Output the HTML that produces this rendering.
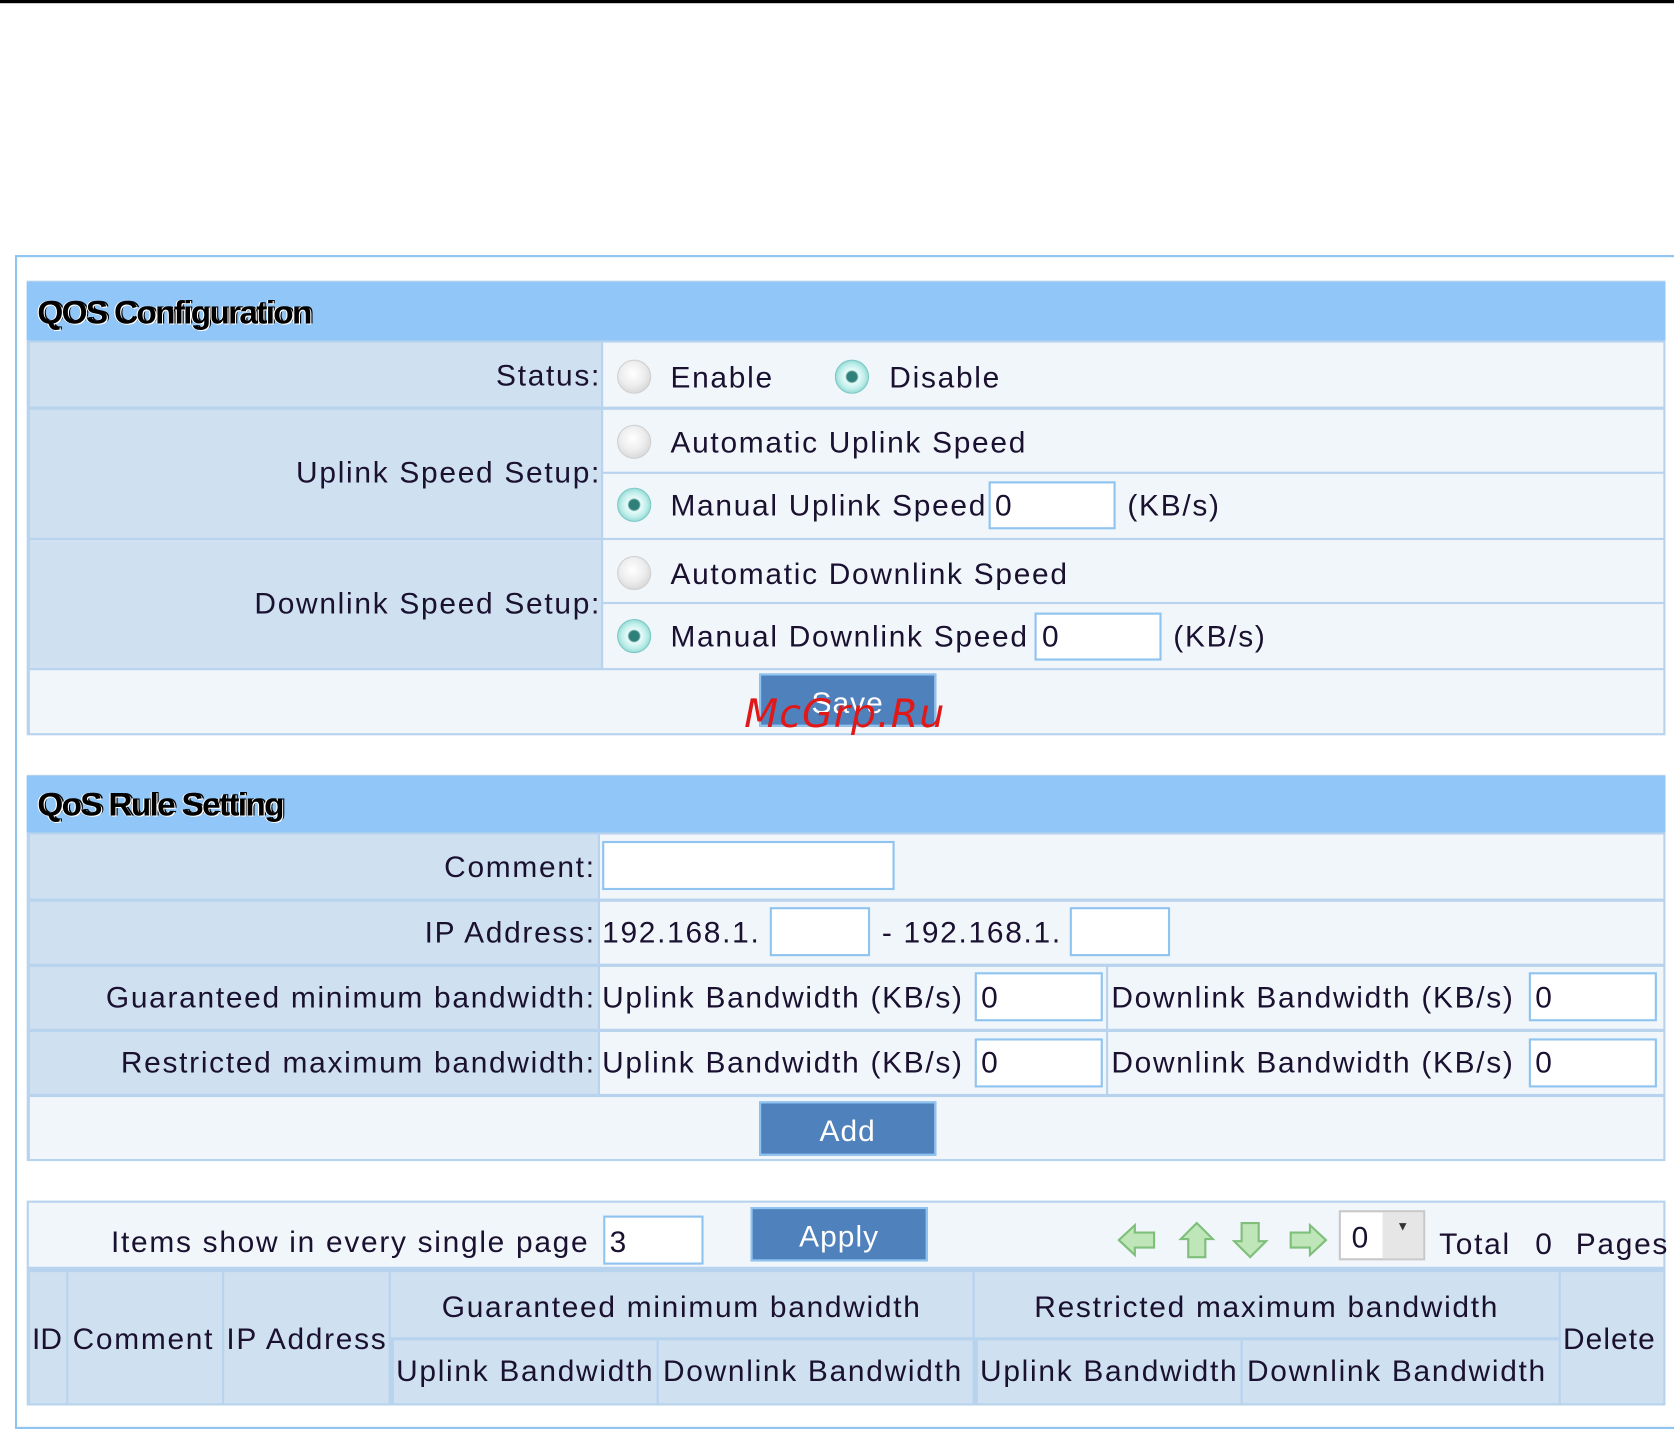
<!DOCTYPE html>
<html><head><meta charset="utf-8">
<style>
html,body{margin:0;padding:0;background:#fff;width:1674px;height:1430px;overflow:hidden}
#w{position:absolute;left:0;top:0;width:1568px;height:1340px;transform:scale(1.0676,1.0672);transform-origin:0 0;font-family:"Liberation Sans","DejaVu Sans",sans-serif;font-size:28px;color:#1a1030}
#w div{position:absolute;box-sizing:border-box}
.l{background:#cfe0f1}
.v{background:#f1f6fb}
.h{background:#90c6f8}
.t{white-space:nowrap;line-height:1;letter-spacing:1.6px}
.r{text-align:right}
.c{text-align:center}
.in{background:#fff;border:2px solid #8fc3f0}
.btn{background:#4f81bd;border:2px solid #8fc3f0;color:#fff;text-align:center;letter-spacing:1px}
.rad{width:32px;height:32px;border-radius:50%;background:radial-gradient(circle at 45% 40%,#fff 0,#eee 45%,#c8c8c8 100%);border:1px solid #d0d0d0}
.rad.on{background:radial-gradient(circle,#2f7f7a 0,#2f7f7a 22%,#e8fbfa 30%,#bfeeea 55%,#5cbdb7 100%);border:1px solid #7ac9c4}
.ttl{font-weight:bold;font-size:30px;color:#000;letter-spacing:-1.5px;text-shadow:1px 1px 0 #fff,-1px 0 0 #fff,2px 0 0 #000;transform:scaleX(1.04);transform-origin:0 0}
</style></head><body>
<div id="w">
<div style="left:0;top:0;width:1568px;height:3px;background:#000"></div>
<div style="left:14px;top:239px;width:1560px;height:1100px;border:2px solid #8fc3f0"></div>

<div style="left:25px;top:263px;width:1535px;height:426px;background:#b7d3ee"></div>
<div class="h" style="left:25px;top:264px;width:1535px;height:55px"></div>
<div class="t ttl" style="left:35px;top:279px">QOS Configuration</div>
<div class="l" style="left:28px;top:321px;width:535px;height:60px"></div>
<div class="v" style="left:565px;top:321px;width:993px;height:60px"></div>
<div class="l" style="left:28px;top:384px;width:535px;height:120px"></div>
<div class="v" style="left:565px;top:384px;width:993px;height:58px"></div>
<div class="v" style="left:565px;top:444px;width:993px;height:60px"></div>
<div class="l" style="left:28px;top:506px;width:535px;height:120px"></div>
<div class="v" style="left:565px;top:506px;width:993px;height:58px"></div>
<div class="v" style="left:565px;top:566px;width:993px;height:60px"></div>
<div class="v" style="left:28px;top:628px;width:1530px;height:59px"></div>

<div class="t r" style="left:28px;width:535px;top:338px">Status:</div>
<div class="rad" style="left:578px;top:337px"></div><div class="t" style="left:628px;top:340px">Enable</div>
<div class="rad on" style="left:782px;top:337px"></div><div class="t" style="left:833px;top:340px">Disable</div>
<div class="t r" style="left:28px;width:535px;top:429px">Uplink Speed Setup:</div>
<div class="rad" style="left:578px;top:398px"></div><div class="t" style="left:628px;top:401px">Automatic Uplink Speed</div>
<div class="rad on" style="left:578px;top:457px"></div><div class="t" style="left:628px;top:460px">Manual Uplink Speed</div>
<div class="in" style="left:926px;top:451px;width:119px;height:45px"></div><div class="t" style="left:932px;top:460px">0</div>
<div class="t" style="left:1056px;top:460px">(KB/s)</div>
<div class="t r" style="left:28px;width:535px;top:552px">Downlink Speed Setup:</div>
<div class="rad" style="left:578px;top:521px"></div><div class="t" style="left:628px;top:524px">Automatic Downlink Speed</div>
<div class="rad on" style="left:578px;top:580px"></div><div class="t" style="left:628px;top:583px">Manual Downlink Speed</div>
<div class="in" style="left:969px;top:574px;width:119px;height:45px"></div><div class="t" style="left:976px;top:583px">0</div>
<div class="t" style="left:1099px;top:583px">(KB/s)</div>
<div class="btn" style="left:711px;top:631px;width:166px;height:50px;padding-top:10px;font-size:28px">Save</div>
<div class="t" style="left:697px;top:650px;color:#e01818;font-style:italic;font-size:37px;letter-spacing:1px;font-family:'DejaVu Sans',sans-serif">McGrp.Ru</div>

<div style="left:25px;top:726px;width:1535px;height:362px;background:#b7d3ee"></div>
<div class="h" style="left:25px;top:727px;width:1535px;height:53px"></div>
<div class="t ttl" style="left:35px;top:740px">QoS Rule Setting</div>
<div class="l" style="left:28px;top:782px;width:532px;height:60px"></div>
<div class="v" style="left:562px;top:782px;width:996px;height:60px"></div>
<div class="l" style="left:28px;top:845px;width:532px;height:58px"></div>
<div class="v" style="left:562px;top:845px;width:996px;height:58px"></div>
<div class="l" style="left:28px;top:906px;width:532px;height:58px"></div>
<div class="v" style="left:562px;top:906px;width:474px;height:58px"></div>
<div class="v" style="left:1038px;top:906px;width:520px;height:58px"></div>
<div class="l" style="left:28px;top:967px;width:532px;height:58px"></div>
<div class="v" style="left:562px;top:967px;width:474px;height:58px"></div>
<div class="v" style="left:1038px;top:967px;width:520px;height:58px"></div>
<div class="v" style="left:28px;top:1028px;width:1530px;height:58px"></div>

<div class="t r" style="left:28px;width:530px;top:799px">Comment:</div>
<div class="in" style="left:564px;top:788px;width:274px;height:46px"></div>
<div class="t r" style="left:28px;width:530px;top:860px">IP Address:</div>
<div class="t" style="left:564px;top:860px">192.168.1.</div>
<div class="in" style="left:721px;top:850px;width:94px;height:46px"></div>
<div class="t" style="left:826px;top:860px">- 192.168.1.</div>
<div class="in" style="left:1002px;top:850px;width:94px;height:46px"></div>
<div class="t r" style="left:28px;width:530px;top:921px">Guaranteed minimum bandwidth:</div>
<div class="t" style="left:564px;top:921px">Uplink Bandwidth (KB/s)</div>
<div class="in" style="left:913px;top:911px;width:120px;height:46px"></div><div class="t" style="left:919px;top:921px">0</div>
<div class="t" style="left:1041px;top:921px">Downlink Bandwidth (KB/s)</div>
<div class="in" style="left:1432px;top:911px;width:120px;height:46px"></div><div class="t" style="left:1438px;top:921px">0</div>
<div class="t r" style="left:28px;width:530px;top:982px">Restricted maximum bandwidth:</div>
<div class="t" style="left:564px;top:982px">Uplink Bandwidth (KB/s)</div>
<div class="in" style="left:913px;top:973px;width:120px;height:46px"></div><div class="t" style="left:919px;top:982px">0</div>
<div class="t" style="left:1041px;top:982px">Downlink Bandwidth (KB/s)</div>
<div class="in" style="left:1432px;top:973px;width:120px;height:46px"></div><div class="t" style="left:1438px;top:982px">0</div>
<div class="btn" style="left:711px;top:1032px;width:166px;height:51px;padding-top:10px">Add</div>

<div style="left:25px;top:1125px;width:1535px;height:192px;background:#b7d3ee"></div>
<div class="v" style="left:27px;top:1127px;width:1531px;height:60px"></div>
<div class="t" style="left:104px;top:1150px">Items show in every single page</div>
<div class="in" style="left:565px;top:1139px;width:94px;height:46px"></div><div class="t" style="left:571px;top:1150px">3</div>
<div class="btn" style="left:703px;top:1131px;width:166px;height:51px;padding-top:10px">Apply</div>
<svg style="position:absolute;left:1045px;top:1140px" width="200" height="45" viewBox="0 0 200 45">
<g fill="#bfe6b8" stroke="#7fbf7a" stroke-width="2">
<path d="M3 22 L18 8 L18 15 L36 15 L36 29 L18 29 L18 36 Z"/>
<path d="M76 6 L91 21 L84 21 L84 38 L68 38 L68 21 L61 21 Z"/>
<path d="M126 38 L111 23 L118 23 L118 6 L134 6 L134 23 L141 23 Z"/>
<path d="M197 22 L182 8 L182 15 L164 15 L164 29 L182 29 L182 36 Z"/>
</g></svg>
<div style="left:1254px;top:1134px;width:81px;height:47px;background:#fff;border:2px solid #c8c8c8"></div>
<div style="left:1295px;top:1136px;width:38px;height:43px;background:#e6e6e6"></div>
<div class="t" style="left:1266px;top:1146px">0</div>
<div class="t" style="left:1308px;top:1143px;font-size:12px;color:#333">▼</div>
<div class="t" style="left:1348px;top:1152px">Total</div>
<div class="t" style="left:1438px;top:1152px">0</div>
<div class="t" style="left:1476px;top:1152px">Pages</div>

<div class="l" style="left:28px;top:1192px;width:34px;height:123px"></div>
<div class="l" style="left:64px;top:1192px;width:144px;height:123px"></div>
<div class="l" style="left:210px;top:1192px;width:154px;height:123px"></div>
<div class="l" style="left:366px;top:1192px;width:545px;height:61px"></div>
<div class="l" style="left:913px;top:1192px;width:547px;height:61px"></div>
<div class="l" style="left:1462px;top:1192px;width:96px;height:123px"></div>
<div class="l" style="left:369px;top:1256px;width:246px;height:59px"></div>
<div class="l" style="left:617px;top:1256px;width:294px;height:59px"></div>
<div class="l" style="left:916px;top:1256px;width:246px;height:59px"></div>
<div class="l" style="left:1164px;top:1256px;width:296px;height:59px"></div>
<div class="t" style="left:30px;top:1241px;letter-spacing:0">ID</div>
<div class="t" style="left:68px;top:1241px">Comment</div>
<div class="t" style="left:212px;top:1241px">IP Address</div>
<div class="t c" style="left:366px;width:545px;top:1211px">Guaranteed minimum bandwidth</div>
<div class="t c" style="left:913px;width:547px;top:1211px">Restricted maximum bandwidth</div>
<div class="t" style="left:1464px;top:1241px;letter-spacing:1px">Delete</div>
<div class="t" style="left:371px;top:1271px">Uplink Bandwidth</div>
<div class="t" style="left:621px;top:1271px">Downlink Bandwidth</div>
<div class="t" style="left:918px;top:1271px">Uplink Bandwidth</div>
<div class="t" style="left:1168px;top:1271px">Downlink Bandwidth</div>
</div>
</body></html>
